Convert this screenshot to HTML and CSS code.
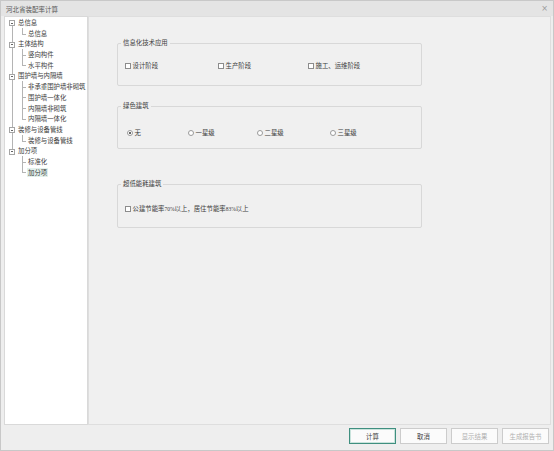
FILE: index.html
```html
<!DOCTYPE html>
<html lang="zh-CN">
<head>
<meta charset="utf-8">
<title>河北省装配率计算</title>
<link rel="stylesheet" href="styles.css">
</head>
<body>
<div class="window">
  <div class="titlebar">
    <span class="title">河北省装配率计算</span>
    <span class="close">×</span>
  </div>
  <div class="main">
    <div class="tree">
      <div class="node root"><span class="exp"></span>总信息</div>
      <div class="node child first">总信息</div>
      <div class="node root"><span class="exp"></span>主体结构</div>
      <div class="node child first">竖向构件</div>
      <div class="node child">水平构件</div>
      <div class="node root"><span class="exp"></span>围护墙与内隔墙</div>
      <div class="node child first">非承重围护墙非砌筑</div>
      <div class="node child">围护墙一体化</div>
      <div class="node child">内隔墙非砌筑</div>
      <div class="node child">内隔墙一体化</div>
      <div class="node root"><span class="exp"></span>装修与设备管线</div>
      <div class="node child first">装修与设备管线</div>
      <div class="node root"><span class="exp"></span>加分项</div>
      <div class="node child first">标准化</div>
      <div class="node child"><span class="sel">加分项</span></div>
    </div>
    <div class="content">
      <div class="group g1">
        <div class="group-title">信息化技术应用</div>
        <div class="opts opts3">
          <label class="opt"><span class="cb"></span>设计阶段</label>
          <label class="opt"><span class="cb"></span>生产阶段</label>
          <label class="opt"><span class="cb"></span>施工、运维阶段</label>
        </div>
      </div>
      <div class="group g2">
        <div class="group-title">绿色建筑</div>
        <div class="opts opts4">
          <label class="opt"><span class="rb checked"></span>无</label>
          <label class="opt"><span class="rb"></span>一星级</label>
          <label class="opt"><span class="rb"></span>二星级</label>
          <label class="opt"><span class="rb"></span>三星级</label>
        </div>
      </div>
      <div class="group g3">
        <div class="group-title">超低能耗建筑</div>
        <div class="opts opts1">
          <label class="opt"><span class="cb"></span>公建节能率<span class="num">70%</span>以上，居住节能率<span class="num">83%</span>以上</label>
        </div>
      </div>
    </div>
  </div>
  <div class="footer">
    <button class="btn primary">计算</button>
    <button class="btn">取消</button>
    <button class="btn disabled">显示结果</button>
    <button class="btn disabled">生成报告书</button>
  </div>
</div>
</body>
</html>
```

FILE: styles.css
```css
html, body {
  margin: 0;
  padding: 0;
  background: #ffffff;
}
body {
  font-family: "Noto Sans CJK SC", "Noto Sans", sans-serif;
  font-size: 6.4px;
  color: #404040;
}
.window {
  width: 554px;
  height: 451px;
  box-sizing: border-box;
  border: 1px solid #c8c8c8;
  background: #eeeeee;
  display: flex;
  flex-direction: column;
}
.titlebar {
  height: 15px;
  flex: none;
  background: #e4e4e4;
  display: flex;
  align-items: center;
  justify-content: space-between;
  padding: 0 5px 0 5px;
  color: #5a5a5a;
}
.title {
  font-size: 6.5px;
}
.close {
  font-family: "DejaVu Sans", sans-serif;
  font-size: 8px;
  color: #9a9a9a;
}
.main {
  height: 409px;
  flex: none;
  display: flex;
  padding: 0 2px 0 3px;
}
.tree {
  width: 84px;
  flex: none;
  box-sizing: border-box;
  background: #ffffff;
  border: 1px solid #d9d9d9;
  padding-top: 1px;
  position: relative;
}
.tree::before {
  content: "";
  position: absolute;
  left: 7px;
  top: 6.35px;
  height: 128.4px;
  border-left: 1px solid #b4b4b4;
}
.node {
  height: 10.7px;
  line-height: 10.7px;
  position: relative;
  white-space: nowrap;
}
.root {
  padding-left: 13px;
}
.exp {
  position: absolute;
  left: 4px;
  top: 2.35px;
  width: 4px;
  height: 4px;
  border: 1px solid #a5a5a5;
  background: #ffffff;
}
.exp::after {
  content: "";
  position: absolute;
  left: 1px;
  top: 1.5px;
  width: 2px;
  height: 1px;
  background: #666666;
}
.child {
  padding-left: 23px;
}
.child::before {
  content: "";
  position: absolute;
  left: 17px;
  top: -5.35px;
  width: 4px;
  height: 10.7px;
  border-left: 1px solid #b4b4b4;
  border-bottom: 1px solid #b4b4b4;
  box-sizing: border-box;
}
.child.first::before {
  top: -1px;
  height: 7.35px;
}
.sel {
  background: #e3f1ec;
  padding: 0 1px;
  margin-left: -1px;
}
.content {
  flex: 1;
  box-sizing: border-box;
  border: 1px solid #dedede;
  background: #f0f0f0;
  padding: 26px 0 0 28px;
}
.group {
  width: 305px;
  box-sizing: border-box;
  border: 1px solid #d8d8d8;
  border-radius: 2px;
}
.g1 { height: 43px; }
.g2 { height: 43px; margin-top: 20px; }
.g3 { height: 44px; margin-top: 35px; }
.group-title {
  width: fit-content;
  margin: -5px 0 0 3px;
  padding: 0 2px;
  line-height: 8px;
  background: #f0f0f0;
}
.opts {
  display: grid;
  line-height: 8px;
}
.g1 .opts {
  margin-top: 15px;
  padding-left: 7px;
  grid-template-columns: 93px 90px auto;
}
.g2 .opts {
  margin-top: 19px;
  padding-left: 9px;
  grid-template-columns: 61px 69px 73px auto;
}
.g3 .opts {
  margin-top: 17px;
  padding-left: 7px;
}
.opt {
  display: flex;
  align-items: center;
  white-space: nowrap;
}
.num {
  font-family: "Liberation Serif", serif;
  font-size: 5.5px;
}
.cb {
  width: 4px;
  height: 4px;
  border: 1px solid #8c8c8c;
  background: #ffffff;
  margin-right: 1.5px;
  flex: none;
}
.rb {
  width: 4px;
  height: 4px;
  border: 1px solid #9a9a9a;
  border-radius: 50%;
  background: #ffffff;
  margin-right: 1.5px;
  flex: none;
  position: relative;
}
.rb.checked::after {
  content: "";
  position: absolute;
  left: 1px;
  top: 1px;
  width: 2px;
  height: 2px;
  border-radius: 50%;
  background: #333333;
}
.footer {
  flex: 1;
  display: flex;
  justify-content: flex-end;
  align-items: flex-start;
  gap: 4px;
  padding: 3px 4px 0 0;
}
.btn {
  width: 47px;
  height: 16px;
  box-sizing: border-box;
  border: 1px solid #cccccc;
  background: #fbfbfb;
  font-family: "Noto Sans CJK SC", "Noto Sans", sans-serif;
  font-size: 6.4px;
  color: #404040;
  padding: 0;
  border-radius: 0;
}
.btn.primary {
  border: 1px solid #3f8f7f;
  box-shadow: inset 0 0 0 1px #c9e3dc;
}
.btn.disabled {
  color: #b0b0b0;
}
```
